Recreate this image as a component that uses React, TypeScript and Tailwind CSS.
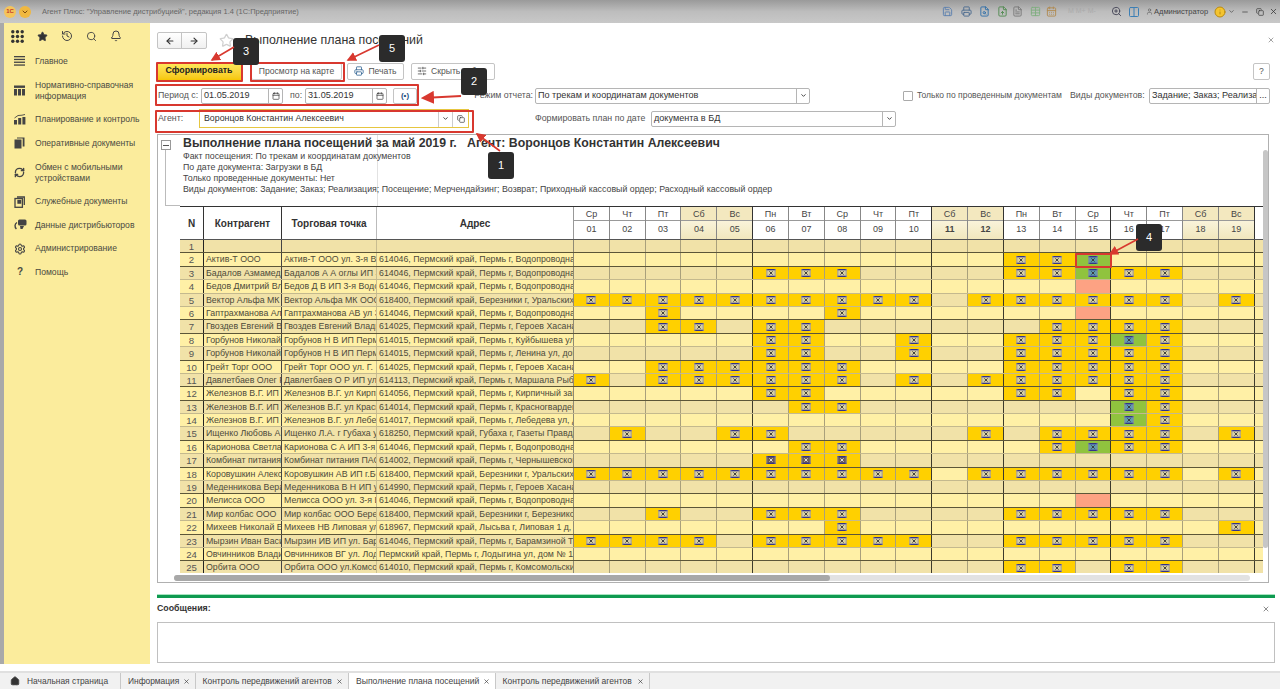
import React from "react";
import { ArrowLeft, ArrowRight, Star, Printer, Calendar, ChevronDown, Copy, Home, X, SlidersHorizontal, History, Search, Bell, Settings, RefreshCw, Save, FileSearch, FileUp, FileText, Info, Minus, Copy as Restore, ZoomIn, Columns2, User, Table, CalendarDays } from "lucide-react";

const DOW = ["Ср","Чт","Пт","Сб","Вс","Пн","Вт","Ср","Чт","Пт","Сб","Вс","Пн","Вт","Ср","Чт","Пт","Сб","Вс"];
const WEEKEND = [4,5,11,12,18,19];
const THICK = [5,10,12,15,19];

type Row = { c: string; t: string; a: string; m: number[]; g?: number[]; s?: number[]; d?: boolean };
const ROWS: Row[] = [
  { c: "", t: "", a: "", m: [] },
  { c: "Актив-Т ООО", t: "Актив-Т ООО ул. 3-я Водопроводная", a: "614046, Пермский край, Пермь г, Водопроводная ул", m: [13,14], g: [15] },
  { c: "Бадалов Азмамед", t: "Бадалов А А оглы ИП 3-я Водопроводная", a: "614046, Пермский край, Пермь г, Водопроводная ул", m: [6,7,8,13,14,16,17], g: [15] },
  { c: "Бедов Дмитрий Вл", t: "Бедов Д В ИП 3-я Водопроводная", a: "614046, Пермский край, Пермь г, Водопроводная ул", m: [], s: [15] },
  { c: "Вектор Альфа МК", t: "Вектор Альфа МК ООО ул. Уральских", a: "618400, Пермский край, Березники г, Уральских Рабочих", m: [1,2,3,4,5,6,7,8,9,10,12,13,14,15,16,17,19] },
  { c: "Гаптрахманова Ал", t: "Гаптрахманова АВ ул 3-я Водопроводная", a: "614046, Пермский край, Пермь г, Водопроводная ул", m: [3,8], s: [15] },
  { c: "Гвоздев Евгений В", t: "Гвоздев Евгений Владимирович", a: "614025, Пермский край, Пермь г, Героев Хасана ул", m: [3,4,6,7,14,15,16,17] },
  { c: "Горбунов Николай", t: "Горбунов Н В ИП Пермь ул", a: "614015, Пермский край, Пермь г, Куйбышева ул, дом", m: [6,7,10,13,14,15,17], g: [16] },
  { c: "Горбунов Николай", t: "Горбунов Н В ИП Пермь ул", a: "614015, Пермский край, Пермь г, Ленина ул, дом № 1", m: [6,7,10,13,14,15,16,17] },
  { c: "Грейт Торг ООО", t: "Грейт Торг ООО ул. Г.", a: "614025, Пермский край, Пермь г, Героев Хасана ул", m: [3,4,5,6,7,8,13,14,15,16,17] },
  { c: "Давлетбаев Олег Р", t: "Давлетбаев О Р ИП ул. Маршала", a: "614113, Пермский край, Пермь г, Маршала Рыбалко", m: [1,3,4,5,6,7,8,10,12,13,14,15,16,17] },
  { c: "Железнов В.Г. ИП", t: "Железнов В.Г. ул Кирпичный", a: "614056, Пермский край, Пермь г, Кирпичный завод", m: [6,7,13,14,16,17] },
  { c: "Железнов В.Г. ИП", t: "Железнов В.Г. ул Красноармейская", a: "614014, Пермский край, Пермь г, Красногвардейская", m: [7,8,17], g: [16] },
  { c: "Железнов В.Г. ИП", t: "Железнов В.Г. ул Лебедева", a: "614017, Пермский край, Пермь г, Лебедева ул, дом", m: [17], g: [16] },
  { c: "Ищенко Любовь А", t: "Ищенко Л.А. г Губаха ул", a: "618250, Пермский край, Губаха г, Газеты Правда ул", m: [2,5,6,12,14,15,16,17,19] },
  { c: "Карионова Светла", t: "Карионова С А ИП 3-я", a: "614046, Пермский край, Пермь г, Водопроводная ул", m: [7,8,14,16,17], g: [15] },
  { c: "Комбинат питания", t: "Комбинат питания ПАО", a: "614002, Пермский край, Пермь г, Чернышевского ул", m: [6,7,8], d: true },
  { c: "Коровушкин Алекс", t: "Коровушкин АВ ИП г.Березники", a: "618400, Пермский край, Березники г, Уральских Рабочих", m: [1,2,3,4,5,6,7,8,9,10,12,13,14,15,16,17,19] },
  { c: "Меденникова Вера", t: "Меденникова В Н ИП ул", a: "614990, Пермский край, Пермь г, Героев Хасана ул", m: [] },
  { c: "Мелисса ООО", t: "Мелисса ООО ул. 3-я Водопроводная", a: "614046, Пермский край, Пермь г, Водопроводная ул", m: [], s: [15] },
  { c: "Мир колбас ООО", t: "Мир колбас ООО Березники", a: "618400, Пермский край, Березники г, Березниковская", m: [3,6,7,8,13,14,15,16,17] },
  { c: "Михеев Николай Е", t: "Михеев НВ Липовая ул", a: "618967, Пермский край, Лысьва г, Липовая 1 д, кв", m: [8,19] },
  { c: "Мырзин Иван Васи", t: "Мырзин ИВ ИП ул. Барамзиной", a: "614046, Пермский край, Пермь г, Барамзиной Татьяны", m: [1,2,3,4,6,7,8,9,10,13,14,15,16,17] },
  { c: "Овчинников Влади", t: "Овчинников ВГ ул. Лодыгина", a: "Пермский край, Пермь г, Лодыгина ул, дом № 1", m: [] },
  { c: "Орбита ООО", t: "Орбита ООО ул.Комсомольский", a: "614010, Пермский край, Пермь г, Комсомольский пр", m: [13,14,16,17] },
];
const DARK_LINES = [1,2,6,7,9,11,12,15,17,19,20,22,24];

function Mark({ dark, blue }: { dark?: boolean; blue?: boolean }) {
  const body = dark ? "#6b5d58" : blue ? "#5f9bb0" : "#d9d0a2";
  return (
    <svg width="10" height="8" viewBox="0 0 10 8" className="block">
      <rect x="0.5" y="0" width="9" height="8" fill={body} />
      <rect x="0.5" y="0" width="9" height="1.3" fill="#33338a" />
      <rect x="0.5" y="6.7" width="9" height="1.3" fill="#33338a" />
      <rect x="0.5" y="0" width="0.8" height="8" fill="#8b88a0" />
      <rect x="8.7" y="0" width="0.8" height="8" fill="#8b88a0" />
      <path d="M3.4 2.4 6.6 5.6M6.6 2.4 3.4 5.6" stroke={dark ? "#eee" : "#333"} strokeWidth="0.9" />
    </svg>
  );
}

function AppsIcon() {
  return (
    <svg width="13" height="13" viewBox="0 0 13 13" fill="#333">
      {[1.8, 6.5, 11.2].flatMap((x) => [1.8, 6.5, 11.2].map((y) => <circle key={`${x}-${y}`} cx={x} cy={y} r="1.7" />))}
    </svg>
  );
}
function LinesIcon() {
  return (
    <svg width="11" height="10" viewBox="0 0 11 10" fill="#444">
      <rect y="0" width="11" height="1.3" /><rect y="2.8" width="11" height="1.3" /><rect y="5.6" width="11" height="1.3" /><rect y="8.4" width="11" height="1.3" />
    </svg>
  );
}
function TableIcon() {
  return (
    <svg width="11" height="11" viewBox="0 0 11 11" fill="#444">
      <rect y="0.5" width="11" height="2.4" /><rect y="4" width="3" height="6.5" /><rect x="4" y="4" width="3" height="6.5" /><rect x="8" y="4" width="3" height="6.5" />
    </svg>
  );
}
function BarsIcon() {
  return (
    <svg width="12" height="11" viewBox="0 0 12 11" fill="#444">
      <rect y="6" width="3" height="4.5" /><rect x="4.2" y="4" width="3" height="6.5" /><rect x="8.4" y="3" width="3" height="7.5" />
      <path d="M0.5 4 4 1.5 8 1.2 11 0.5" stroke="#444" strokeWidth="0.9" fill="none" />
    </svg>
  );
}
function DocsIcon() {
  return (
    <svg width="11" height="12" viewBox="0 0 11 12" fill="#444">
      <rect x="0.5" y="2.5" width="7" height="9" /><path d="M3 1.5V0.5H10.5V9.5H8.7V1.5Z" />
    </svg>
  );
}
function ServiceIcon() {
  return (
    <svg width="11" height="12" viewBox="0 0 11 12" fill="none" stroke="#444" strokeWidth="1.3">
      <rect x="1" y="2.5" width="7.4" height="8.8" /><path d="M3 1H10.3V9" /><rect x="4" y="4.5" width="2.6" height="2.6" fill="#444" />
    </svg>
  );
}
function DistribIcon() {
  return (
    <svg width="13" height="12" viewBox="0 0 13 12" fill="#444">
      <rect x="4" y="0.5" width="8.5" height="6" rx="1.5" /><path d="M6 7 h4 l-1.5 3 h-2z" />
      <path d="M3 3.5 C0.6 5 0.4 8 2.4 10" stroke="#444" strokeWidth="1.4" fill="none" />
    </svg>
  );
}

function NavItem({ icon, children, tall }: { icon: React.ReactNode; children: React.ReactNode; tall?: boolean }) {
  return (
    <div className={`flex items-center pl-[10px] text-[#4a4a42] ${tall ? "h-[35px]" : "h-[23.5px]"}`}>
      <span className="w-[21px] shrink-0 flex justify-start">{icon}</span>
      <span className="leading-[11px] text-[8.6px] whitespace-nowrap">{children}</span>
    </div>
  );
}

function TabItem({ label, active, w, fs }: { label: string; active?: boolean; w: string; fs: string }) {
  return (
    <div className={`h-full flex items-center justify-between pl-[7px] pr-[5px] border-r border-[#c8c8c8] whitespace-nowrap ${w} ${fs} ${active ? "bg-white" : "bg-[#f1f1f1]"} text-[#444]`}>
      <span>{label}</span>
      <X size={7} strokeWidth={2.4} className="shrink-0" />
    </div>
  );
}

function GridRow({ r, i }: { r: Row; i: number }) {
  const odd = (i + 1) % 2 === 1;
  const bg = odd ? "bg-[#f1e2a8]" : "bg-[#fff0a6]";
  const dark = DARK_LINES.includes(i + 1);
  const line = dark ? "border-b border-[#5c5638]" : "border-b border-[#c4b98e]";
  return (
    <div className={`flex h-[13.4px] box-border ${line} ${bg} text-[#4d4a3a] text-[8.8px] leading-[13px]`}>
      <div className="w-[24px] shrink-0 text-center border-r border-[#222] text-[#555] text-[9.6px]">{i + 1}</div>
      <div className="w-[78px] shrink-0 overflow-hidden whitespace-nowrap pl-[2px] border-r border-[#444]">{r.c}</div>
      <div className="w-[95px] shrink-0 overflow-hidden whitespace-nowrap pl-[2px] border-r border-[#c9bd90]">{r.t}</div>
      <div className="w-[197px] shrink-0 overflow-hidden whitespace-nowrap pl-[2px] border-r border-[#8f8a74]">{r.a}</div>
      {DOW.map((_, k) => {
        const d = k + 1;
        const isGold = r.m.includes(d);
        const isGreen = r.g?.includes(d);
        const isSalmon = r.s?.includes(d);
        const cell = isGreen ? "bg-[#90c33e]" : isSalmon ? "bg-[#fda283]" : isGold ? "bg-[#ffd000]" : "";
        const border = THICK.includes(d) ? "border-r border-[#3c3a2c]" : "border-r border-[#a9a07c]";
        return (
          <div key={k} className={`w-[35.83px] shrink-0 flex items-center justify-center ${cell} ${border}`}>
            {(isGold || isGreen) && <Mark dark={r.d} blue={isGreen} />}
          </div>
        );
      })}
      <div className="grow" />
    </div>
  );
}

function Overlays() {
  const boxes: [string, string][] = [
    ["3", "left-[233px] top-[38px]"],
    ["5", "left-[379px] top-[35px]"],
    ["2", "left-[461px] top-[68px]"],
    ["1", "left-[488px] top-[152px]"],
    ["4", "left-[1136px] top-[224px]"],
  ];
  const rects = [
    "left-[156px] top-[62px] w-[87px] h-[20px]",
    "left-[250px] top-[62px] w-[95px] h-[20px]",
    "left-[155px] top-[84px] w-[264px] h-[22px]",
    "left-[155px] top-[110px] w-[319px] h-[23px]",
    "left-[1075px] top-[253px] w-[37px] h-[15px]",
  ];
  return (
    <>
      {rects.map((c, i) => (
        <div key={i} className={`absolute border-2 border-[#d8382f] rounded-[1px] ${c}`} />
      ))}
      {boxes.map(([t, c]) => (
        <div key={t} className={`absolute w-[26px] h-[27px] bg-[#2b2b2b] rounded-[3px] text-white text-[11px] flex items-center justify-center ${c}`}>{t}</div>
      ))}
      <svg className="absolute left-0 top-0 pointer-events-none" width="1280" height="689">
        <defs>
          <marker id="ah" markerWidth="6" markerHeight="6" refX="5" refY="3" orient="auto">
            <path d="M0 0 6 3 0 6z" fill="#d8382f" />
          </marker>
        </defs>
        <g stroke="#d8382f" strokeWidth="1.6" fill="none">
          <path d="M234 47 212 60" markerEnd="url(#ah)" />
          <path d="M379 45 348 60" markerEnd="url(#ah)" />
          <path d="M461 96 423 98" markerEnd="url(#ah)" strokeWidth="2.2" />
          <path d="M500 151 477 134" markerEnd="url(#ah)" />
          <path d="M1138 239 1110 254" markerEnd="url(#ah)" />
        </g>
      </svg>
    </>
  );
}

const field = "shrink-0 h-[16px] border border-[#b5b5b5] rounded-[2px] bg-white flex items-center text-[9.1px] text-[#333]";

export default function App() {
  return (
    <div className="relative w-[1280px] h-[689px] overflow-hidden bg-white flex flex-col font-['Liberation_Sans',Arial,sans-serif] text-[#333]">
      {/* title bar */}
      <div className="h-[23px] shrink-0 bg-gradient-to-b from-[#9a9a9a] via-[#bdbdbd] to-[#c8c8c8] flex items-center pl-[4px]">
        <div className="w-[12px] h-[12px] rounded-full bg-[#f5c45a] text-[#c0392b] text-[6px] font-bold flex items-center justify-center">1С</div>
        <div className="ml-[3px] w-[12px] h-[12px] rounded-full bg-[#f0b840] flex items-center justify-center"><ChevronDown size={8} strokeWidth={3} className="text-[#7a4a10]" /></div>
        <div className="ml-[11px] text-[7.5px] text-[#666] whitespace-nowrap">Агент Плюс: "Управление дистрибуцией", редакция 1.4 (1С:Предприятие)</div>
        <div className="ml-auto flex items-center pr-[2px] text-[#5b7fae]">
          <Save size={11} /><Printer size={11} className="ml-[8px] text-[#4a6a8e]" /><FileSearch size={11} className="ml-[7px] text-[#2f6fa8]" />
          <FileUp size={11} className="ml-[7px] text-[#4f8a4f]" /><FileText size={11} className="ml-[4px] text-[#777]" />
          <Table size={11} className="ml-[7px] text-[#7fae7f]" /><CalendarDays size={11} className="ml-[5px] text-[#b08a50]" />
          <span className="ml-[11px] w-[43px] text-[7px] text-[#aaa] whitespace-nowrap">M M+ M-</span>
          <ZoomIn size={11} className="text-[#445]" /><Columns2 size={12} className="ml-[6px] text-[#3c7fb5]" />
          <User size={7} className="ml-[6px] text-[#555]" />
          <span className="ml-[1px] w-[60px] text-[7.5px] text-[#444] whitespace-nowrap">Администратор</span>
          <Info size={12} className="text-[#b98a10] fill-[#f4c430]" />
          <ChevronDown size={7} className="ml-[2px] text-[#333]" />
          <Minus size={8} className="ml-[6px] text-[#333]" /><Restore size={8} className="ml-[7px] text-[#333]" /><X size={9} className="ml-[5px] text-[#333]" />
        </div>
      </div>

      <div className="flex grow min-h-0">
        {/* sidebar */}
        <div className="w-[150px] shrink-0 border-l-[4px] border-[#a9a9a9] bg-[#fbec9c] flex flex-col">
          <div className="h-[26.5px] flex items-center gap-[13px] pl-[7px] text-[#444]">
            <AppsIcon /><Star size={11} fill="#333" /><History size={12} /><Search size={11} /><Bell size={12} />
          </div>
          <div>
            <NavItem icon={<LinesIcon />}>Главное</NavItem>
            <NavItem tall icon={<TableIcon />}>Нормативно-справочная<br />информация</NavItem>
            <NavItem icon={<BarsIcon />}>Планирование и контроль</NavItem>
            <NavItem icon={<DocsIcon />}>Оперативные документы</NavItem>
            <NavItem tall icon={<RefreshCw size={11} strokeWidth={3} className="text-[#444]" />}>Обмен с мобильными<br />устройствами</NavItem>
            <NavItem icon={<ServiceIcon />}>Служебные документы</NavItem>
            <NavItem icon={<DistribIcon />}>Данные дистрибьюторов</NavItem>
            <NavItem icon={<Settings size={12} strokeWidth={2.2} className="text-[#444]" />}>Администрирование</NavItem>
            <NavItem icon={<span className="font-bold text-[10px] leading-[10px] pl-[3px]">?</span>}>Помощь</NavItem>
          </div>
        </div>

        {/* main */}
        <div className="grow min-w-0 flex flex-col pl-[7px] pr-[5px]">
          {/* header row */}
          <div className="h-[36px] shrink-0 flex items-start pt-[9px]">
            <div className="flex h-[17px] w-[50px] border border-[#c4c4c4] rounded-[2px] bg-gradient-to-b from-white to-[#f0f0f0]">
              <div className="w-1/2 flex items-center justify-center border-r border-[#c4c4c4]"><ArrowLeft size={10} strokeWidth={2.6} /></div>
              <div className="w-1/2 flex items-center justify-center"><ArrowRight size={10} strokeWidth={2.6} /></div>
            </div>
            <Star size={15} className="ml-[12px] mt-[1px] text-[#d0d0d0]" />
            <div className="ml-[11px] text-[12.4px] leading-[17px] mt-[0px] text-[#333]">Выполнение плана посещений</div>
            <X size={8} className="ml-auto mt-[4px] text-[#777]" />
          </div>
          {/* buttons */}
          <div className="h-[24px] shrink-0 flex items-center text-[8.6px] text-[#555]">
            <div className="shrink-0 w-[84px] h-[17px] bg-gradient-to-b from-[#ffe95a] to-[#f6c700] font-bold text-[8.8px] text-[#222] flex items-center justify-center">Сформировать</div>
            <div className="shrink-0 ml-[10px] w-[91px] h-[17px] flex items-center justify-center border border-[#ccc] bg-white rounded-[2px]">Просмотр на карте</div>
            <div className="shrink-0 ml-[5px] w-[57px] h-[17px] flex items-center justify-center gap-[4px] border border-[#c4c4c4] bg-white rounded-[2px]"><Printer size={10} className="text-[#3a6a98]" />Печать</div>
            <div className="shrink-0 ml-[7px] w-[84px] h-[17px] flex items-center gap-[4px] pl-[5px] border border-[#c4c4c4] bg-white rounded-[2px]"><SlidersHorizontal size={10} />Скрыть отбор</div>
            <div className="shrink-0 ml-auto mr-[5px] w-[17px] h-[17px] flex items-center justify-center border border-[#c4c4c4] rounded-[2px]">?</div>
          </div>
          {/* filter rows */}
          <div className="h-[24px] shrink-0 flex items-center text-[8.8px] text-[#555] pl-[1px] pt-[1px] whitespace-nowrap">
            <span className="shrink-0 w-[43px]">Период с:</span>
            <div className={`${field} w-[82px] pl-[2px] justify-between`}>01.05.2019<span className="border-l border-[#b5b5b5] h-full w-[14px] flex items-center justify-center"><Calendar size={8} /></span></div>
            <span className="shrink-0 ml-[7px] w-[15px]">по:</span>
            <div className={`${field} w-[82px] pl-[2px] justify-between`}>31.05.2019<span className="border-l border-[#b5b5b5] h-full w-[14px] flex items-center justify-center"><Calendar size={8} /></span></div>
            <div className="shrink-0 ml-[6px] w-[24px] h-[16px] border border-[#c4c4c4] rounded-[2px] flex items-center justify-center text-[#1f4f7f] font-bold text-[8px]">(•)</div>
            <span className="shrink-0 ml-[48px] w-[70px] text-right pr-[2px]">Режим отчета:</span>
            <div className={`${field} w-[275px] pl-[2px] justify-between`}>По трекам и координатам документов<span className="border-l border-[#b5b5b5] h-full w-[13px] flex items-center justify-center"><ChevronDown size={7} strokeWidth={3} /></span></div>
            <span className="ml-[93px] w-[10px] h-[10px] border border-[#aaa] rounded-[1px] shrink-0" />
            <span className="shrink-0 ml-[4px] w-[148px] text-[8.5px]">Только по проведенным документам</span>
            <span className="shrink-0 ml-[5px] w-[76px]">Виды документов:</span>
            <div className={`${field} ml-[3px] w-[121px] pl-[2px] justify-between overflow-hidden`}><span className="overflow-hidden">Задание; Заказ; Реализац</span><span className="border-l border-[#b5b5b5] h-full w-[13px] shrink-0 flex items-center justify-center">...</span></div>
          </div>
          <div className="h-[22px] shrink-0 flex items-center text-[8.8px] text-[#555] pl-[1px] pt-[1px] whitespace-nowrap">
            <span className="shrink-0 w-[41px]">Агент:</span>
            <div className="shrink-0 w-[270px] h-[19px] border border-[#e6c640] bg-white flex items-center pl-[4px] text-[8.8px] text-[#333] justify-between">Воронцов Константин Алексеевич
              <span className="flex h-full items-center"><span className="border-l border-[#ccc] h-full w-[14px] flex items-center justify-center"><ChevronDown size={7} strokeWidth={3} /></span><span className="border-l border-[#ccc] h-full w-[16px] flex items-center justify-center"><Copy size={8} /></span></span>
            </div>
            <span className="shrink-0 ml-[66px] w-[109px]">Формировать план по дате</span>
            <div className={`${field} ml-[7px] w-[245px] pl-[2px] justify-between`}>документа в БД<span className="border-l border-[#b5b5b5] h-full w-[13px] flex items-center justify-center"><ChevronDown size={7} strokeWidth={3} /></span></div>
          </div>

          {/* report */}
          <div className="mt-[5px] h-[449px] w-[1112px] shrink-0 border border-[#b0b0b0] flex flex-col overflow-hidden">
            <div className="flex grow min-h-0">
              <div className="w-[1105px] shrink-0 flex flex-col min-h-0 overflow-hidden">
                <div className="h-[71px] shrink-0 flex relative">
                  <div className="w-[22px] shrink-0 relative">
                    <div className="ml-[3px] mt-[5px] w-[10px] h-[10px] border border-[#999] flex items-center justify-center"><span className="w-[6px] h-px bg-[#555]" /></div>
                    <div className="absolute left-[7px] top-[15px] h-[56px] border-l border-[#bbb]" />
                    <div className="absolute left-[7px] top-[70px] w-[15px] border-t border-[#bbb]" />
                  </div>
                  <div className="absolute left-[219px] top-0 bottom-0 border-l border-[#e2e2e2]" />
                  <div className="relative pl-[3px] pt-[2px] text-[8.8px] text-[#444]">
                    <div className="text-[12.3px] leading-[13px] font-bold text-[#333] whitespace-pre mb-[0.5px]">Выполнение плана посещений за май 2019 г.   Агент: Воронцов Константин Алексеевич</div>
                    <div className="h-[11.3px] leading-[11px]">Факт посещения: По трекам и координатам документов</div>
                    <div className="h-[11.3px] leading-[11px]">По дате документа: Загрузки в БД</div>
                    <div className="h-[11.3px] leading-[11px]">Только проведенные документы: Нет</div>
                    <div className="h-[11.3px] leading-[11px]">Виды документов: Задание; Заказ; Реализация; Посещение; Мерчендайзинг; Возврат; Приходный кассовый ордер; Расходный кассовый ордер</div>
                  </div>
                </div>
                {/* table */}
                <div className="ml-[22px] w-[1083px] grow min-h-0 overflow-hidden">
                  <div className="flex h-[34px] border-t border-[#333] border-b border-b-[#555] text-[10px] bg-white">
                    <div className="w-[24px] shrink-0 font-bold flex items-center justify-center border-r border-[#333]">N</div>
                    <div className="w-[78px] shrink-0 font-bold flex items-center justify-center border-r border-[#333]">Контрагент</div>
                    <div className="w-[95px] shrink-0 font-bold flex items-center justify-center border-r border-[#bbb]">Торговая точка</div>
                    <div className="w-[197px] shrink-0 font-bold flex items-center justify-center border-r border-[#999]">Адрес</div>
                    {DOW.map((d, k) => {
                      const n = k + 1;
                      const wk = WEEKEND.includes(n);
                      return (
                        <div key={k} className={`w-[35.83px] shrink-0 flex flex-col text-center text-[9px] text-[#444] ${THICK.includes(n) ? "border-r border-[#333]" : "border-r border-[#888]"}`}>
                          <div className={`h-[14px] leading-[14px] border-b border-[#999] ${wk ? "bg-[#f3e8bf]" : ""}`}>{d}</div>
                          <div className={`grow flex items-center justify-center ${wk ? "bg-gradient-to-b from-[#f9f3da] to-[#f1e7bd]" : ""} ${n === 11 || n === 12 ? "font-bold" : ""}`}>{String(n).padStart(2, "0")}</div>
                        </div>
                      );
                    })}
                    <div className="grow" />
                  </div>
                  {ROWS.map((r, i) => <GridRow key={i} r={r} i={i} />)}
                </div>
              </div>
              {/* vertical scrollbar */}
              <div className="w-[5px] shrink-0 relative">
                <div className="absolute left-0 right-0 top-[15px] bottom-[25px] bg-[#c6c6c6] rounded-[3px]" />
              </div>
            </div>
            <div className="h-[9px] shrink-0 flex items-center pl-[16px] pr-[18px]">
              <div className="w-full h-[6px] rounded-[3px] bg-[#e2e2e2]">
                <div className="w-[656px] h-full rounded-[3px] bg-[#a8a8a8]" />
              </div>
            </div>
          </div>

          {/* messages */}
          <div className="mt-[11px] h-[4px] shrink-0 bg-[#0e9a50] border-t border-[#a8e4c0]" />
          <div className="h-[24px] shrink-0 flex items-center justify-between text-[8.8px] font-bold text-[#333] pb-[3px]">Сообщения:<X size={8} className="mr-[5px] text-[#555]" /></div>
          <div className="h-[41px] shrink-0 border border-[#c0c0c0]" />
        </div>
      </div>

      {/* tabs */}
      <div className="h-[18px] shrink-0 border-t-2 border-[#e0e0e0] mt-[7px] bg-[#f1f1f1] flex items-center">
        <div className="h-full w-[121px] flex items-center gap-[7px] pl-[10px] border-r border-[#c8c8c8] text-[8.4px] text-[#444] whitespace-nowrap"><Home size={10} fill="#333" />Начальная страница</div>
        <TabItem label="Информация" w="w-[74.5px]" fs="text-[8.4px]" />
        <TabItem label="Контроль передвижений агентов" w="w-[153.5px]" fs="text-[8.5px]" />
        <TabItem label="Выполнение плана посещений" w="w-[146.5px]" fs="text-[8.6px]" active />
        <TabItem label="Контроль передвижений агентов" w="w-[154px]" fs="text-[8.5px]" />
      </div>

      <Overlays />
    </div>
  );
}
